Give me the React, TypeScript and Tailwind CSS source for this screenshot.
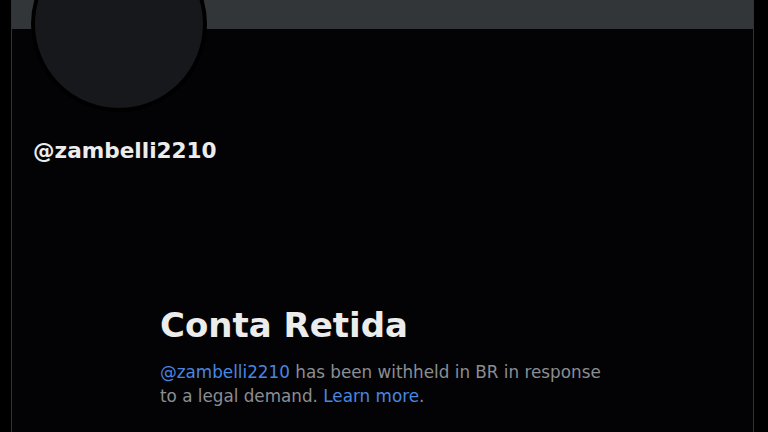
export default function App() {
  return (
    <div className="w-[768px] h-[432px] bg-black overflow-hidden flex font-['DejaVu_Sans',sans-serif]">
      <div className="ml-[11px] w-[743px] h-full border-x border-[#2f3336] bg-[#030305] flex flex-col">
        <div className="h-[29px] shrink-0 bg-[#333639]" />

        <div className="ml-[19px] -mt-[93px] w-[176px] h-[176px] shrink-0 rounded-full border-4 border-black bg-[#17181c]" />

        <div className="ml-[21px] mt-[26px] text-[21.6px] leading-[26px] font-bold text-[#ececec]">
          @zambelli2210
        </div>

        <div className="ml-[148px] mt-[141px] w-[460px]">
          <h1 className="text-[34px] leading-[40px] font-bold text-[#ececec]">Conta Retida</h1>
          <p className="mt-[15px] text-[16.8px] leading-[24px] text-[#8a8e93]">
            <span className="text-[#4a86e0]">@zambelli2210</span> has been withheld in BR in response to a legal demand.{' '}
            <span className="text-[#4a86e0]">Learn more</span>.
          </p>
        </div>
      </div>
    </div>
  )
}
